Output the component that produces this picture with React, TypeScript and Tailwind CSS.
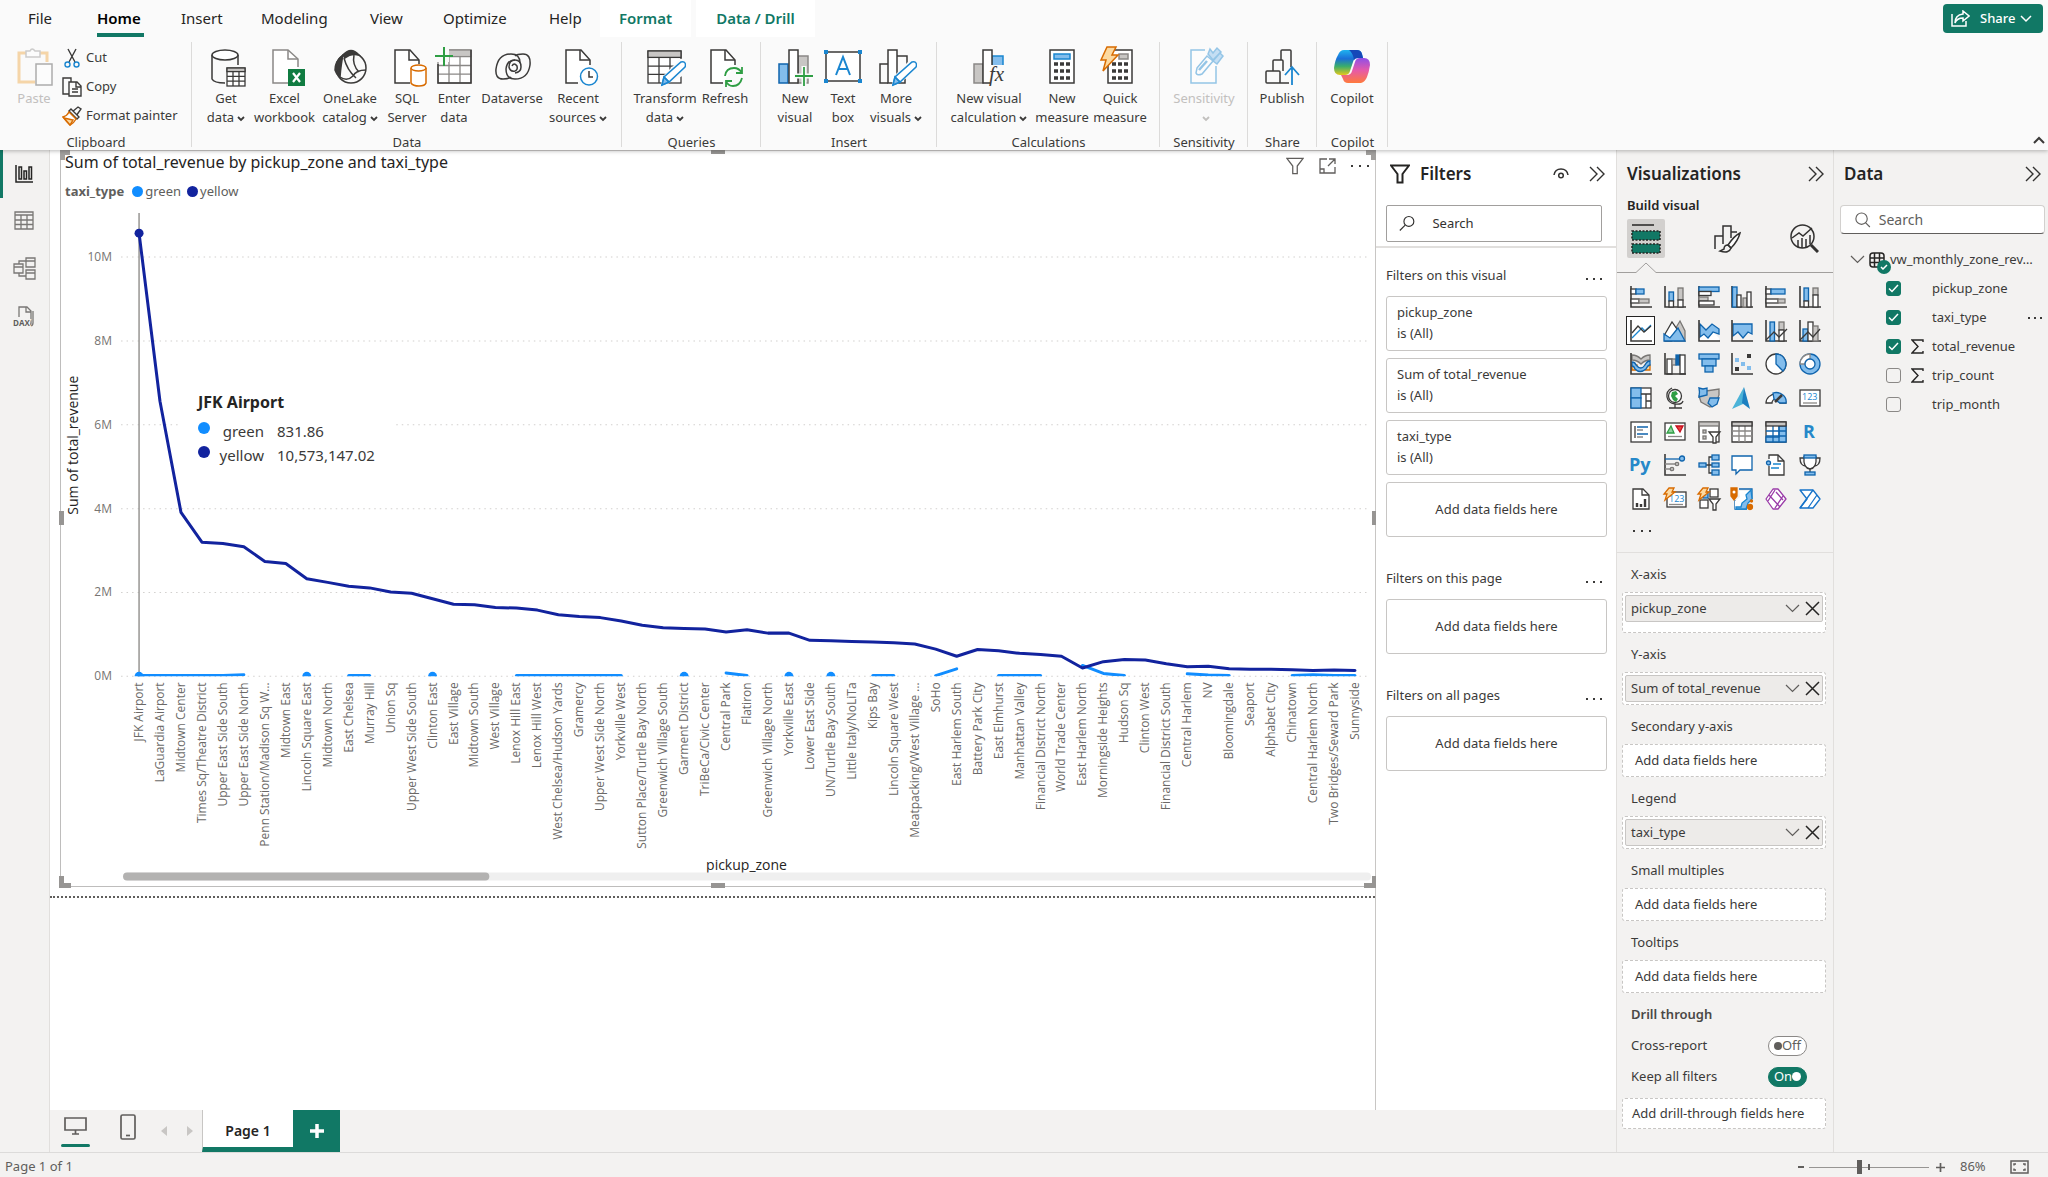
import React from "react";

const DARK = "#3b3a39";
const GRAY = "#8a8886";
const LGRAY = "#c8c6c4";
const BLUE = "#1a86d0";
const NAVY = "#0f64ad";
const SKY = "#83bdec";
const GREEN = "#2f9e44";
const ORANGE = "#d86b00";
const PEACH = "#fcd9a0";

/* ---------- ribbon icons ---------- */

type Kids = { children: React.ReactNode };

function Ico({ children }: Kids) {
  return (
    <svg width="42" height="42" viewBox="0 0 42 42" fill="none" stroke={DARK} strokeWidth="1.5" aria-hidden="true">
      {children}
    </svg>
  );
}

const Grid3 = ({ x, y, w, h, s = DARK }: { x: number; y: number; w: number; h: number; s?: string }) => (
  <g stroke={s} strokeWidth="1.3">
    <rect x={x} y={y} width={w} height={h} fill="#fff" />
    <rect x={x} y={y} width={w} height={h * 0.2} fill={LGRAY} />
    <path
      d={`M${x} ${y + h * 0.47}h${w}M${x} ${y + h * 0.73}h${w}M${x + w / 3} ${y + h * 0.2}v${h * 0.8}M${x + (2 * w) / 3} ${y + h * 0.2}v${h * 0.8}`}
    />
  </g>
);

const Pencil = () => (
  <g stroke={BLUE}>
    <path d="M18 39l2-8 17-15q3-1 4 1t0 4L25 36z" fill="#fff" />
    <path d="M18 39l2-8 5 5z" fill={SKY} />
    <path d="M20 31l5 5" />
  </g>
);

const icons: Record<string, React.ReactNode> = {
  paste: (
    <Ico>
      <g opacity="0.4">
        <path d="M13 7H6v29h16M27 7h7v9" stroke="#f0a030" strokeWidth="3" />
        <path d="M13 5h4q2-4 5 0h5v6H13z" stroke={GRAY} fill="#fff" />
        <rect x="23" y="18" width="16" height="21" stroke={DARK} fill="#fff" />
      </g>
    </Ico>
  ),
  getData: (
    <Ico>
      <path d="M7 9v24q2 4 13 4M33 9v10" />
      <ellipse cx="20" cy="9" rx="13" ry="5" fill="#fff" />
      <Grid3 x={22} y={22} w={18} h={18} />
    </Ico>
  ),
  excel: (
    <Ico>
      <path d="M24 37H9V4h15l10 9v8" stroke={GRAY} fill="#fff" />
      <path d="M24 4v9h10" stroke={GRAY} />
      <rect x="24" y="23" width="17" height="17" fill="#107c41" stroke="none" />
      <path d="M29 27l7 9M36 27l-7 9" stroke="#fff" strokeWidth="2.2" />
    </Ico>
  ),
  onelake: (
    <Ico>
      <circle cx="22" cy="22" r="15" />
      <path d="M14 9Q22 0 30 9q-8-2-14 3z" fill={DARK} />
      <path d="M14 9q-8 6-8 15 1 4 5 7 1-13 3-22z" fill={DARK} />
      <path d="M15 12q3 12 12 20M37 24q-10 0-13 6-6 6-13 1M25 9q-2 10 5 17" />
    </Ico>
  ),
  sql: (
    <Ico>
      <path d="M24 37H9V4h15l9 10v4" fill="#fff" />
      <path d="M23 4v10h10" />
      <g stroke={ORANGE}>
        <path d="M25 22v15q2 3 8 3t7-3V22" fill="#fff" />
        <ellipse cx="32.500" cy="22" rx="7.500" ry="3" fill="#fff" />
      </g>
    </Ico>
  ),
  enter: (
    <Ico>
      <Grid3 x={5} y={4} w={33} h={33} s={GRAY} />
      <rect x="0" y="0" width="16" height="16" fill="#fafafa" stroke="none" />
      <path d="M5 18v19h33V4" />
      <path d="M11 1v19M2 10h18" stroke={GREEN} strokeWidth="2" />
    </Ico>
  ),
  dataverse: (
    <Ico>
      <path d="M32 8q8 0 7 11-2 14-15 14-9 0-9-10 1-9 9-9 6 0 6 7 0 5-6 6" />
      <path d="M12 33q-8 0-7-10Q7 8 20 8q9 0 9 9" />
      <path d="M32 8q-6 0-8 2M12 33q6 0 8-2" />
      <path d="M24 14q-6 0-6 7 1 5 6 4 3-1 2-5-3-4-5 0" />
    </Ico>
  ),
  recent: (
    <Ico>
      <path d="M21 37H9V4h15l9 10v5" fill="#fff" />
      <path d="M23 4v10h10" />
      <circle cx="32" cy="30.500" r="8.500" stroke={BLUE} fill="#fff" />
      <path d="M32 25v6h4" />
    </Ico>
  ),
  transform: (
    <Ico>
      <Grid3 x={4} y={5} w={33} h={32} />
      <path d="M16 42l3-12 17-17h8v14z" fill="#fafafa" stroke="none" />
      <Pencil />
    </Ico>
  ),
  refresh: (
    <Ico>
      <path d="M19 37H7V4h15l9 10v5" fill="#fff" />
      <path d="M21 4v10h10" />
      <g stroke={GREEN} strokeWidth="1.8">
        <path d="M21 30q1-8 9-8 5 0 8 5M38 21v6h-6M38 32q-2 8-9 8-5 0-7-5M22 41v-6h6" />
      </g>
    </Ico>
  ),
  newVisual: (
    <Ico>
      <rect x="5" y="18" width="9" height="19" fill={SKY} stroke={NAVY} />
      <rect x="24" y="10" width="10" height="27" fill={LGRAY} stroke={GRAY} />
      <rect x="15" y="4" width="9" height="33" fill="#fff" />
      <path d="M30 20v20M20 30h19" stroke="#fafafa" strokeWidth="5" />
      <path d="M30 21v19M21 30h18" stroke={GREEN} strokeWidth="1.800" />
    </Ico>
  ),
  textBox: (
    <Ico>
      <rect x="4" y="6" width="34" height="29" fill="#fff" />
      <g fill={BLUE} stroke="none">
        <rect x="2" y="4" width="4" height="4" />
        <rect x="36" y="4" width="4" height="4" />
        <rect x="2" y="33" width="4" height="4" />
        <rect x="36" y="33" width="4" height="4" />
      </g>
      <path d="M14 29l7-18 7 18M16.500 23h9" stroke={BLUE} strokeWidth="2" />
    </Ico>
  ),
  moreVisuals: (
    <Ico>
      <path d="M13 37H5V18h8M22 10h10v8" />
      <path d="M22 4h-9v33h9z" fill="#fff" />
      <path d="M30 26v11h-7" />
      <path d="M16 42l3-12 14-14h8v10z" fill="#fafafa" stroke="none" />
      <Pencil />
    </Ico>
  ),
  visualCalc: (
    <Ico>
      <rect x="6" y="18" width="9" height="19" fill={LGRAY} stroke={GRAY} />
      <rect x="24" y="10" width="11" height="10" fill={SKY} stroke={BLUE} />
      <rect x="15" y="4" width="9" height="33" fill="#fff" />
      <rect x="22" y="19" width="18" height="21" fill="#fafafa" stroke="none" />
      <text x="21" y="35" fontFamily="Liberation Serif, serif" fontStyle="italic" fontSize="21" fill={DARK} stroke="none">
        fx
      </text>
    </Ico>
  ),
  measure: (
    <Ico>
      <rect x="9" y="4" width="24" height="33" fill="#fff" />
      <rect x="13" y="8" width="16" height="5" fill={SKY} stroke={BLUE} />
      <path d="M13 18h16M13 25h16M13 32h16" strokeWidth="3.500" strokeDasharray="4 2" />
    </Ico>
  ),
  quick: (
    <Ico>
      <rect x="9" y="4" width="24" height="33" fill="#fff" />
      <rect x="20" y="8" width="9" height="5" fill={LGRAY} stroke={GRAY} />
      <path d="M13 18h16M13 25h16M13 32h16" strokeWidth="3.500" strokeDasharray="4 2" />
      <path d="M8 1h9l-4 8h6L4 25l3-11H2z" fill={PEACH} stroke={ORANGE} />
    </Ico>
  ),
  sensitivity: (
    <Ico>
      <g stroke={BLUE} opacity="0.45">
        <path d="M22 4H8v33h25V20" fill="#fff" />
        <path d="M14 22l10-12 6 5-11 13q-5 2-6-1z" fill="#fff" />
        <path d="M16 24l8-9" strokeWidth="2.500" />
        <path d="M25 8l5 6 8-8-4-4-4 5-3-4z" fill={SKY} />
        <path d="M30 15l4 3 6-8-3-3z" fill={SKY} />
      </g>
    </Ico>
  ),
  publish: (
    <Ico>
      <path d="M20 14V5q0-1 1-1h8q1 0 1 1v16" />
      <path d="M12 25V15q0-1 1-1h8q1 0 1 1v10" />
      <path d="M19 37H6q-1 0-1-1V26q0-1 1-1h12q1 0 1 1v10q0 1-1 1h10" />
      <path d="M31 39V22M24 29l7-8 7 8" stroke={BLUE} strokeWidth="1.800" />
    </Ico>
  ),
  copilot: (
    <Ico>
      <defs>
        <linearGradient id="cpA" x1="0" y1="0" x2="0" y2="1">
          <stop offset="0" stopColor="#1fb3ef" />
          <stop offset="0.35" stopColor="#1a6fd8" />
          <stop offset="0.65" stopColor="#39ad6b" />
          <stop offset="1" stopColor="#e4c81c" />
        </linearGradient>
        <linearGradient id="cpB" x1="0" y1="0" x2="0" y2="1">
          <stop offset="0" stopColor="#8f4fe8" />
          <stop offset="0.5" stopColor="#e65aa8" />
          <stop offset="1" stopColor="#ff7a3c" />
        </linearGradient>
      </defs>
      <g stroke="none">
        <path d="M30 37H17q-4 0-5-4l-2-4h6q4 0 5-4l3-9q1-4 5-4h4q6 0 6 7-1 7-3 12t-6 6z" fill="url(#cpB)" />
        <path d="M13 4h13q4 0 5 4l1 4h-5q-4 0-5 4l-3 9q-1 4-5 4H9q-6 0-6-7 1-8 4-13 2-5 6-5z" fill="url(#cpA)" />
        <path d="M18 4h8q4 0 5 4l1 4h-5q-3 0-4 2-1-7-5-10z" fill="#1547b8" />
      </g>
    </Ico>
  ),
};

const Caret = ({ className = "" }: { className?: string }) => (
  <svg width="8" height="6" viewBox="0 0 8 6" className={"inline-block " + className} fill="none" stroke="currentColor" strokeWidth="1.8" aria-hidden="true">
    <path d="M1 1l3 3 3-3" />
  </svg>
);

type Tool = { icon: string; a: string; b?: string; caret?: boolean; w: string; off?: boolean };

const tools: Record<string, Tool[]> = {
  Data: [
    { icon: "getData", a: "Get", b: "data", caret: true, w: "w-[52px]" },
    { icon: "excel", a: "Excel", b: "workbook", w: "w-[65px]" },
    { icon: "onelake", a: "OneLake", b: "catalog", caret: true, w: "w-[66px]" },
    { icon: "sql", a: "SQL", b: "Server", w: "w-[48px]" },
    { icon: "enter", a: "Enter", b: "data", w: "w-[46px]" },
    { icon: "dataverse", a: "Dataverse", w: "w-[70px]" },
    { icon: "recent", a: "Recent", b: "sources", caret: true, w: "w-[62px]" },
  ],
  Queries: [
    { icon: "transform", a: "Transform", b: "data", caret: true, w: "w-[66px]" },
    { icon: "refresh", a: "Refresh", w: "w-[54px]" },
  ],
  Insert: [
    { icon: "newVisual", a: "New", b: "visual", w: "w-[48px]" },
    { icon: "textBox", a: "Text", b: "box", w: "w-[48px]" },
    { icon: "moreVisuals", a: "More", b: "visuals", caret: true, w: "w-[58px]" },
  ],
  Calculations: [
    { icon: "visualCalc", a: "New visual", b: "calculation", caret: true, w: "w-[88px]" },
    { icon: "measure", a: "New", b: "measure", w: "w-[58px]" },
    { icon: "quick", a: "Quick", b: "measure", w: "w-[58px]" },
  ],
  Sensitivity: [{ icon: "sensitivity", a: "Sensitivity", b: "", caret: true, w: "w-[70px]", off: true }],
  Share: [{ icon: "publish", a: "Publish", w: "w-[54px]" }],
  Copilot: [{ icon: "copilot", a: "Copilot", w: "w-[54px]" }],
};

const groups: [string, string, string][] = [
  ["Data", "w-[430px]", "pl-2"],
  ["Queries", "w-[139px]", "pl-[10px]"],
  ["Insert", "w-[176px]", "pl-[10px]"],
  ["Calculations", "w-[223px]", "pl-2"],
  ["Sensitivity", "w-[88px]", "pl-[9px]"],
  ["Share", "w-[69px]", "pl-[7px]"],
  ["Copilot", "w-[71px]", "pl-2"],
];

function ToolButton({ t }: { t: Tool }) {
  return (
    <button disabled={t.off} className={"flex shrink-0 flex-col items-center whitespace-nowrap leading-[19px] disabled:text-[#c2c0be] " + t.w}>
      <span className="mb-px h-[42px]">{icons[t.icon]}</span>
      <span>{t.a}</span>
      <span>
        {t.b}
        {t.caret && <Caret className="ml-[3px]" />}
      </span>
    </button>
  );
}

const tabs: [string, string][] = [
  ["File", "w-[32px]"],
  ["Home", "w-[47px]"],
  ["Insert", "w-[43px]"],
  ["Modeling", "w-[72px]"],
  ["View", "w-[36px]"],
  ["Optimize", "w-[69px]"],
  ["Help", "w-[35px]"],
];

const divider = "relative flex shrink-0 flex-col after:absolute after:right-0 after:top-1 after:bottom-[3px] after:w-px after:bg-[#dcdbda] ";

function Ribbon() {
  return (
    <header className="relative z-20 bg-[#fafafa] shadow-[0_1px_4px_rgba(0,0,0,0.28)]">
      <div className="flex h-[38px] items-start justify-between pr-[5px]">
        <nav className="flex text-[15px] text-[#252423]">
          <div className="flex gap-[37px] pl-7">
            {tabs.map(([t, w]) => (
              <button
                key={t}
                className={
                  "h-[37px] whitespace-nowrap border-y-4 border-transparent text-left " +
                  w +
                  (t === "Home" ? " border-b-[#117865] font-semibold text-black" : "")
                }
              >
                {t}
              </button>
            ))}
          </div>
          <button className="ml-[16px] h-[37px] w-[91px] bg-white font-semibold text-[#117865]">Format</button>
          <button className="ml-[5px] h-[37px] w-[119px] bg-white font-semibold text-[#117865]">Data / Drill</button>
        </nav>
        <button className="mt-1 flex h-[29px] w-[100px] items-center rounded bg-[#117865] pl-2 text-[13px] font-medium text-white">
          <svg width="19" height="18" viewBox="0 0 19 18" fill="none" stroke="#fff" strokeWidth="1.5" aria-hidden="true">
            <path d="M1 4v12h14v-5" />
            <path d="M12 1l6 5-6 5V8Q6 8 4 13q0-8 8-9z" />
          </svg>
          <span className="ml-[10px]">Share</span>
          <svg width="12" height="8" viewBox="0 0 12 8" fill="none" stroke="#fff" strokeWidth="1.500" className="ml-[5px]" aria-hidden="true">
            <path d="M1 1l5 5 5-5" />
          </svg>
        </button>
      </div>
      <div className="flex h-[112px] text-[13px] text-[#3b3a39]">
        <section className={divider + "w-[192px]"}>
          <div className="flex flex-1 pt-2 pl-[12px]">
            <button disabled className="flex w-[44px] flex-col items-center leading-[19px] text-[#c2c0be]">
              <span className="mb-px h-[42px]">{icons.paste}</span>Paste
            </button>
            <div className="-mt-[3px] flex flex-col pl-[6px]">
              <button className="flex h-[29px] items-center gap-1">
                <svg width="20" height="20" viewBox="0 0 20 20" fill="none" stroke={DARK} strokeWidth="1.4" aria-hidden="true">
                  <path d="M6 1l7 13M14 1L7 14" />
                  <circle cx="5.500" cy="16.500" r="2.500" stroke={BLUE} />
                  <circle cx="14.500" cy="16.500" r="2.500" stroke={BLUE} />
                </svg>
                Cut
              </button>
              <button className="flex h-[29px] items-center gap-1">
                <svg width="20" height="20" viewBox="0 0 20 20" fill="#fafafa" stroke={DARK} strokeWidth="1.400" aria-hidden="true">
                  <path d="M7 17H1V1h8v4" />
                  <path d="M7 5h8l4 4v10H7zM14 5v5h5M10 12h6M10 15h6" />
                </svg>
                Copy
              </button>
              <button className="flex h-[29px] items-center gap-1 whitespace-nowrap">
                <svg width="20" height="20" viewBox="0 0 20 20" fill="none" stroke={DARK} strokeWidth="1.400" aria-hidden="true">
                  <path d="M10 6l6-5 3 2-5 7" />
                  <path d="M9 3l8 8-2 2-8-8z" fill="#fafafa" />
                  <path d="M7 6l7 7q-2 4-6 6-4-4-7-8 4-1 6-5z" stroke={ORANGE} fill="#fff" />
                  <path d="M2 12l9 2-3 5z" stroke={ORANGE} fill={PEACH} />
                </svg>
                Format painter
              </button>
            </div>
          </div>
          <div className="text-center leading-4">Clipboard</div>
        </section>
        {groups.map(([g, w, pad]) => (
          <section key={g} className={divider + w}>
            <div className={"flex flex-1 pt-2 " + pad}>
              {tools[g].map((t) => (
                <ToolButton key={t.icon} t={t} />
              ))}
            </div>
            <div className="text-center leading-4">{g}</div>
          </section>
        ))}
        <div className="flex flex-1 items-end justify-end pr-[3px] pb-[6px]">
          <button aria-label="Collapse ribbon">
            <svg width="12" height="8" viewBox="0 0 12 8" fill="none" stroke={DARK} strokeWidth="2" aria-hidden="true">
              <path d="M1 7l5-5 5 5" />
            </svg>
          </button>
        </div>
      </div>
    </header>
  );
}

/* ---------- left rail ---------- */

function Rail() {
  const item = "flex h-12 w-full items-center justify-center border-l-[3px] pr-[4px] ";
  return (
    <nav className="flex w-[50px] shrink-0 flex-col border-r border-[#e1dfdd]">
      <button aria-label="Report view" className={item + "border-[#117865]"}>
        <svg width="18" height="18" viewBox="0 0 18 18" fill="none" stroke="#252423" strokeWidth="1.500">
          <path d="M1 0v17h17" />
          <rect x="4" y="2" width="2.500" height="12" />
          <rect x="9" y="6" width="2.500" height="8" />
          <rect x="14" y="2" width="2.500" height="12" />
        </svg>
      </button>
      <button aria-label="Table view" className={item + "border-transparent pb-[3px]"}>
        <svg width="20" height="19" viewBox="0 0 20 19" fill="none" stroke="#797775" strokeWidth="1.300">
          <path d="M1 1h18v17H1zM1 4h18M1 9h18M1 13.500h18M7 4v14M13 4v14" />
        </svg>
      </button>
      <button aria-label="Model view" className={item + "border-transparent pb-[3px]"}>
        <svg width="23" height="23" viewBox="0 0 23 23" fill="none" stroke="#797775" strokeWidth="1.300">
          <path d="M13 1h9v9h-9zM13 4h9M13 13h9v9h-9zM13 16h9M1 7h9v9H1zM1 10h9M6 7V4h7M6 16v3h7" />
        </svg>
      </button>
      <button aria-label="DAX query view" className={item + "border-transparent pb-[3px]"}>
        <svg width="23" height="21" viewBox="0 0 23 21" fill="none" stroke="#797775" strokeWidth="1.300">
          <path d="M6 11V1h8l4 4v12q0 2-2 2M13 1v5h5M20 5v12q0 3-3 3" />
          <text x="0" y="20" fontSize="8" fontWeight="700" fontFamily="Open Sans" fill="#605e5c" stroke="#f3f2f1" strokeWidth="2" paintOrder="stroke">
            DAX
          </text>
        </svg>
      </button>
    </nav>
  );
}

/* ---------- chart ---------- */

const zones = [
  "JFK Airport", "LaGuardia Airport", "Midtown Center", "Times Sq/Theatre District", "Upper East Side South",
  "Upper East Side North", "Penn Station/Madison Sq W…", "Midtown East", "Lincoln Square East", "Midtown North",
  "East Chelsea", "Murray Hill", "Union Sq", "Upper West Side South", "Clinton East", "East Village", "Midtown South",
  "West Village", "Lenox Hill East", "Lenox Hill West", "West Chelsea/Hudson Yards", "Gramercy",
  "Upper West Side North", "Yorkville West", "Sutton Place/Turtle Bay North", "Greenwich Village South",
  "Garment District", "TriBeCa/Civic Center", "Central Park", "Flatiron", "Greenwich Village North",
  "Yorkville East", "Lower East Side", "UN/Turtle Bay South", "Little Italy/NoLiTa", "Kips Bay",
  "Lincoln Square West", "Meatpacking/West Village …", "SoHo", "East Harlem South", "Battery Park City",
  "East Elmhurst", "Manhattan Valley", "Financial District North", "World Trade Center", "East Harlem North",
  "Morningside Heights", "Hudson Sq", "Clinton West", "Financial District South", "Central Harlem", "NV",
  "Bloomingdale", "Seaport", "Alphabet City", "Chinatown", "Central Harlem North", "Two Bridges/Seward Park",
  "Sunnyside",
];

// Revenue in millions, in the same order as zones.
const yellow = [
  10.57, 6.56, 3.91, 3.2, 3.17, 3.09, 2.74, 2.69, 2.33, 2.24, 2.15, 2.11, 2.01, 1.98, 1.85, 1.72, 1.71, 1.64, 1.63,
  1.58, 1.47, 1.43, 1.4, 1.32, 1.22, 1.16, 1.14, 1.13, 1.06, 1.11, 1.03, 1.03, 0.86, 0.85, 0.83, 0.82, 0.8, 0.77,
  0.65, 0.48, 0.64, 0.61, 0.55, 0.52, 0.48, 0.2, 0.35, 0.4, 0.39, 0.3, 0.23, 0.24, 0.18, 0.17, 0.17, 0.16, 0.14,
  0.15, 0.14,
];

const green: [number, number][][] = [
  [[0, 0.02], [1, 0.02], [2, 0.02], [3, 0.02], [4, 0.02], [5, 0.04]],
  [[10, 0.02], [11, 0.02]],
  [[18, 0.02], [23, 0.02]],
  [[28, 0.08], [29, 0.02]],
  [[35, 0.02], [36, 0.02]],
  [[38, 0.02], [39, 0.18]],
  [[41, 0.02], [43, 0.02]],
  [[45, 0.26], [46, 0.07], [47, 0.02]],
  [[50, 0.06], [51, 0.03], [52, 0.02]],
  [[55, 0.02], [56, 0.04], [57, 0.02], [58, 0.02]],
];
const greenDots = [0, 8, 14, 26, 31, 33];

const px = (i: number) => 139 + (i * 1215) / 58;
const py = (m: number) => 677 - m * 41.9;
const pts = (a: [number, number][]) => a.map(([i, m]) => `${px(i).toFixed(1)},${py(m).toFixed(1)}`).join(" ");

function Chart() {
  return (
    <svg viewBox="61 206 1313 680" className="block h-auto w-full" fontFamily="Open Sans, sans-serif" role="img" aria-label="Line chart of total revenue by pickup zone">
      <defs>
        <clipPath id="plot">
          <rect x="110" y="205" width="1264" height="472" />
        </clipPath>
      </defs>
      {[0, 2, 4, 6, 8, 10].map((m) => (
        <g key={m}>
          <line x1="121" x2="1368" y1={py(m)} y2={py(m)} stroke="#d2d0ce" strokeWidth="1" strokeDasharray="1.500 4" />
          <text x="112" y={py(m) + 4} textAnchor="end" fontSize="12" fill="#777472">
            {m}M
          </text>
        </g>
      ))}
      <line x1="139" x2="139" y1="214" y2="677" stroke="#979593" strokeWidth="1.500" />
      <g clipPath="url(#plot)" fill="none" strokeWidth="3" strokeLinejoin="round" strokeLinecap="round">
        {green.map((g) => (
          <polyline key={g[0][0]} points={pts(g)} stroke="#118dff" />
        ))}
        {greenDots.map((i) => (
          <circle key={i} cx={px(i)} cy={py(0)} r="4.500" fill="#118dff" />
        ))}
        <polyline points={pts(yellow.map((v, i) => [i, v]))} stroke="#12239e" />
        <circle cx={px(0)} cy={py(10.57)} r="4.500" fill="#12239e" />
      </g>
      {zones.map((z, i) => (
        <text key={z} transform={`translate(${px(i) + 4} 683) rotate(-90)`} textAnchor="end" fontSize="12" fill="#6b6967">
          {z}
        </text>
      ))}
      <text transform="translate(78 446) rotate(-90)" textAnchor="middle" fontSize="14" fill="#252423">
        Sum of total_revenue
      </text>
      <text x="746" y="870" textAnchor="middle" fontSize="14" fill="#252423">
        pickup_zone
      </text>
      <rect x="123" y="873" width="1247" height="8" rx="4" fill="#efefef" />
      <rect x="123" y="873" width="366" height="8" rx="4" fill="#b3b2b1" />
    </svg>
  );
}

function Dot({ c, s = "size-[11px]" }: { c: string; s?: string }) {
  return <span className={"inline-block rounded-full " + s + " " + c} />;
}

const Handles = () => (
  <>
    <i className="absolute -top-px -left-px size-[10px] border-t-[5px] border-l-[5px] border-[#a19f9d]" />
    <i className="absolute -top-px -right-px size-[10px] border-t-[5px] border-r-[5px] border-[#a19f9d]" />
    <i className="absolute -bottom-[2px] -left-[2px] size-[12px] border-b-[5px] border-l-[5px] border-[#979593]" />
    <i className="absolute -bottom-[2px] -right-px size-[12px] border-b-[5px] border-r-[4px] border-[#979593]" />
    <i className="absolute -top-px left-1/2 h-1 w-[14px] -translate-x-1/2 bg-[#979593]" />
    <i className="absolute -bottom-[2px] left-1/2 h-[5px] w-[14px] -translate-x-1/2 bg-[#979593]" />
    <i className="absolute top-1/2 -left-[2px] h-[14px] w-[5px] -translate-y-1/2 bg-[#979593]" />
    <i className="absolute top-1/2 -right-px h-[14px] w-1 -translate-y-1/2 bg-[#979593]" />
  </>
);

const Funnel = ({ size, c = "#252423", w = 2 }: { size: number; c?: string; w?: number }) => (
  <svg width={size} height={size} viewBox="0 0 20 20" fill="none" stroke={c} strokeWidth={w} aria-hidden="true">
    <path d="M1 1.500h18l-6.500 8.500v8.500h-5V10z" />
  </svg>
);

const Dots = ({ gap = "gap-[5px]" }: { gap?: string }) => (
  <span className={"flex " + gap}>
    <i className="size-[2px] bg-[#3b3a39]" />
    <i className="size-[2px] bg-[#3b3a39]" />
    <i className="size-[2px] bg-[#3b3a39]" />
  </span>
);

function Canvas() {
  return (
    <main className="min-w-0 flex-1 border-r border-[#c8c6c4] bg-white">
      <div className="relative ml-[10px] border border-r-0 border-[#bebdbc] border-t-[#d2d0ce]">
        <Handles />
        <div className="h-[54px] pl-1 pr-[6px]">
          <div className="flex h-[27px] items-start justify-between">
            <h2 className="text-[16px] leading-[22px] text-[#252423]">Sum of total_revenue by pickup_zone and taxi_type</h2>
            <div className="mt-[6px] flex items-center gap-[15px]">
              <button aria-label="Filters"><Funnel size={18} c="#605e5c" w={1.4} /></button>
              <button aria-label="Focus mode">
                <svg width="17" height="16" viewBox="0 0 17 16" fill="none" stroke="#605e5c" strokeWidth="1.300">
                  <path d="M8 1H1v14h15V9M10 1h6v5M16 1L9 8M1 11h4v4" />
                </svg>
              </button>
              <button aria-label="More options"><Dots gap="gap-[6px]" /></button>
            </div>
          </div>
          <div className="flex h-[27px] items-center text-[13px] text-[#605e5c]">
            <b className="mr-[8px]">taxi_type</b>
            <Dot c="bg-[#118dff]" />
            <span className="ml-[2px] mr-[6px]">green</span>
            <Dot c="bg-[#12239e]" />
            <span className="ml-[2px]">yellow</span>
          </div>
        </div>
        <div className="relative">
          <Chart />
          <div role="tooltip" className="absolute left-[120px] top-[181px] w-[213px] bg-white pt-[5px] pb-3 pl-[17px] text-[15px] text-[#3b3a39]">
            <div className="text-[16px] leading-[23px] font-bold text-[#252423]">JFK Airport</div>
            <div className="grid grid-cols-[66px_1fr] gap-x-[13px] pt-[5px] leading-[24px]">
              <span className="flex items-center justify-between"><Dot c="bg-[#118dff]" s="size-3 -mt-[6px]" />green</span>
              <span>831.86</span>
              <span className="flex items-center justify-between"><Dot c="bg-[#12239e]" s="size-3 -mt-[6px]" />yellow</span>
              <span>10,573,147.02</span>
            </div>
          </div>
        </div>
      </div>
      <div className="mt-[9px] border-t-2 border-dotted border-[#605e5c]" />
    </main>
  );
}

/* ---------- filters pane ---------- */

const Chevrons = () => (
  <button aria-label="Collapse pane">
    <svg width="16" height="16" viewBox="0 0 16 16" fill="none" stroke="#323130" strokeWidth="1.400">
      <path d="M1 1l7 7-7 7M8 1l7 7-7 7" />
    </svg>
  </button>
);

function FilterSection({ title, fields }: { title: string; fields: string[] }) {
  return (
    <section className="pr-[9px] pl-[10px] pb-[23px]">
      <div className="flex h-[39px] items-center justify-between pr-[5px] pb-[2px]">
        <h3>{title}</h3>
        <button aria-label={title + " options"} className="pt-[6px]"><Dots /></button>
      </div>
      {fields.map((f) => (
        <div key={f} className="mb-[7px] flex h-[55px] flex-col justify-center rounded-[3px] border border-[#c8c6c4] pl-[10px] pb-[2px] leading-[21px]">
          <span>{f}</span>
          <span>is (All)</span>
        </div>
      ))}
      <div className="flex h-[55px] items-center justify-center rounded-[3px] border border-[#c8c6c4]">Add data fields here</div>
    </section>
  );
}

function Filters() {
  return (
    <aside className="w-[240px] shrink-0 bg-white text-[13px] text-[#3b3a39]">
      <div className="flex h-[48px] items-center pl-[14px] pr-[11px]">
        <Funnel size={20} />
        <h2 className="ml-[10px] text-[17px] font-semibold text-[#252423]">Filters</h2>
        <button aria-label="Show filter pane" className="ml-auto mr-[20px]">
          <svg width="16" height="12" viewBox="0 0 16 12" fill="none" stroke="#323130" strokeWidth="1.500">
            <path d="M1 7q1-6 7-6t7 6" />
            <circle cx="8" cy="7.500" r="2.300" />
          </svg>
        </button>
        <Chevrons />
      </div>
      <div className="border-b-2 border-[#e1dfdd] pt-[7px] pb-[4px] pl-[10px] pr-[14px]">
        <label className="flex h-[37px] items-center rounded-[2px] border border-[#a19f9d] px-3">
          <svg width="20" height="19" viewBox="0 0 20 19" fill="none" stroke="#323130" strokeWidth="1.400" aria-hidden="true">
            <circle cx="12" cy="7" r="6" />
            <path d="M7.500 11.500L1 18" />
          </svg>
          <input aria-label="Search filters" placeholder="Search" className="ml-[17px] w-full min-w-0 bg-transparent outline-none placeholder:text-[#323130]" />
        </label>
      </div>
      <div className="pt-[9px]">
        <FilterSection title="Filters on this visual" fields={["pickup_zone", "Sum of total_revenue", "taxi_type"]} />
        <FilterSection title="Filters on this page" fields={[]} />
        <FilterSection title="Filters on all pages" fields={[]} />
      </div>
    </aside>
  );
}

/* ---------- visualization gallery ---------- */

const ax = <path d="M1 0v21h21" stroke={DARK} strokeWidth="1.6" />;
const B = { fill: SKY, stroke: NAVY };
const G = { fill: LGRAY, stroke: "#797775" };
const W = { fill: "#fff", stroke: DARK };
const bolt = <path d="M5 0h5L8 4h3L1 12l2-6H0z" fill={PEACH} stroke={ORANGE} />;
const smallFunnel = <path d="M11 11h11l-4 5v6h-3v-6z" {...W} />;

const visuals: [string, React.ReactNode][] = [
  ["Stacked bar chart", <>{ax}<rect x="1" y="3" width="5" height="5" {...W} /><rect x="6" y="3" width="8" height="5" {...B} /><rect x="1" y="13" width="8" height="4" {...W} /><rect x="9" y="13" width="10" height="4" {...G} /></>],
  ["Stacked column chart", <>{ax}<rect x="5" y="6" width="4.500" height="9" {...B} /><rect x="5" y="15" width="4.500" height="6" {...W} /><rect x="14" y="2" width="5" height="12" {...G} /><rect x="14" y="14" width="5" height="7" {...W} /></>],
  ["Clustered bar chart", <>{ax}<rect x="1" y="1" width="20" height="4.500" {...B} /><rect x="1" y="5.500" width="12" height="4" {...W} /><rect x="1" y="11" width="9" height="4" {...G} /><rect x="1" y="15" width="15" height="4" {...W} /></>],
  ["Clustered column chart", <>{ax}<rect x="1.500" y="1" width="4.500" height="20" {...B} /><rect x="6" y="9" width="4" height="12" {...W} /><rect x="12" y="12" width="4" height="9" {...G} /><rect x="16" y="6" width="4" height="15" {...W} /></>],
  ["100% stacked bar chart", <>{ax}<rect x="1" y="3" width="5" height="5" {...W} /><rect x="6" y="3" width="14" height="5" {...B} /><rect x="1" y="13" width="12" height="4" {...W} /><rect x="13" y="13" width="7" height="4" {...G} /></>],
  ["100% stacked column chart", <>{ax}<rect x="5" y="2" width="4.500" height="13" {...B} /><rect x="5" y="15" width="4.500" height="6" {...W} /><rect x="14" y="2" width="5" height="7" {...G} /><rect x="14" y="9" width="5" height="12" {...W} /></>],
  ["Line chart", <>{ax}<path d="M2 18l10-10 3 3 6-6" stroke={BLUE} /><path d="M2 13l6-7 6 6 7-6" stroke={DARK} /></>],
  ["Area chart", <><path d="M10 11l6-10 5 10v10H10z" {...G} /><path d="M1 14L8 2l7 10-7 9H1z" {...W} /><path d="M0 21V14l6 4 8-10 7 13z" {...B} /></>],
  ["Stacked area chart", <><path d="M2 17l4-3 4 4 5-6 6 6v3H2z" fill="#fff" stroke="none" /><path d="M2 4l6 6 6-6 7 5v5l-6-2-5 6-4-4-4 3z" {...B} />{ax}</>],
  ["100% stacked area chart", <><path d="M2 4h19v10l-4-2-5 6-5-6-5 4z" {...B} />{ax}</>],
  ["Line and stacked column chart", <>{ax}<rect x="5" y="2" width="4.500" height="19" {...B} /><rect x="14" y="2" width="5" height="8" {...G} /><rect x="14" y="10" width="5" height="11" {...W} /><path d="M1 20l8-8 5 5 8-8" stroke={DARK} /></>],
  ["Line and clustered column chart", <>{ax}<rect x="4" y="9" width="5" height="12" {...B} /><rect x="9" y="2" width="5" height="19" {...W} /><rect x="14" y="6" width="5" height="15" {...G} /><path d="M1 20l8-8 5 5 7-8" stroke={DARK} /></>],
  ["Ribbon chart", <><path d="M2 12h5v5H2zM15 12h5v5h-5z" fill={PEACH} stroke={ORANGE} /><path d="M2 2q5 0 9 4 4-4 9-4v5q-5 0-9 4-4-4-9-4z" {...G} /><path d="M2 9q3 0 4 3 5 6 9 0 2-4 5-4v4q-2 0-4 4-6 5-11 0-1-3-3-3z" {...B} />{ax}</>],
  ["Waterfall chart", <><rect x="3" y="6" width="5" height="15" {...W} /><rect x="8" y="6" width="4" height="6" {...G} /><rect x="12" y="2" width="4" height="10" fill={NAVY} stroke={NAVY} /><rect x="16" y="2" width="5" height="19" {...W} />{ax}</>],
  ["Funnel", <><rect x="1" y="1" width="20" height="5" {...B} /><rect x="4" y="6" width="14" height="7" {...B} /><rect x="7" y="13" width="8" height="6" {...B} /></>],
  ["Scatter chart", <>{ax}<g stroke="none"><rect x="4" y="5" width="4" height="4" fill={SKY} /><rect x="10" y="9" width="4" height="4" fill={SKY} /><rect x="16" y="13" width="4" height="4" fill={SKY} /><rect x="16" y="1" width="4" height="4" fill={DARK} /><rect x="4" y="14" width="4" height="4" fill={DARK} /></g></>],
  ["Pie chart", <><circle cx="11" cy="11" r="10" {...W} /><path d="M11 1a10 10 0 0 1 7 17l-7-7z" {...B} /></>],
  ["Donut chart", <><circle cx="11" cy="11" r="10" {...B} /><path d="M11 1v5a5 5 0 0 0-5 5H1A10 10 0 0 1 11 1z" fill="#fff" stroke={GRAY} /><circle cx="11" cy="11" r="5" fill="#fff" stroke={NAVY} /></>],
  ["Treemap", <><rect x="1" y="1" width="20" height="20" {...W} /><rect x="1" y="1" width="10" height="10" {...B} /><rect x="1" y="11" width="10" height="10" {...B} /><path d="M11 7h10M16 7v14M16 14h5" stroke={DARK} /></>],
  ["Map", <><circle cx="11" cy="9" r="6.500" {...W} /><path d="M8 5l4-1 2 3-3 2 3 3-2 3-3-2-2-4z" fill={GREEN} stroke="none" /><path d="M8 1q-6 3-5 9t8 7 8-3M11 17v4M5 21h13" stroke={DARK} /></>],
  ["Filled map", <><path d="M8 4l13-2v6l-3 9-6 3-9-5-2-6z" {...G} /><path d="M1 1l4 1 4-1v7l-8 2q1-5 0-9z" {...B} /><path d="M12 11h9l-2 6-5 3-4-4z" {...B} /></>],
  ["Azure map", <g stroke="none"><path d="M13 0L1 22l11-5z" fill="#4bb3d8" /><path d="M13 0l6 22-8-6z" fill="#1b7fc0" /></g>],
  ["Gauge", <><path d="M1 16a10 9 0 0 1 20 0h-6a4 4 0 0 0-8 0z" {...W} /><path d="M8 6a10 9 0 0 1 13 10h-6l-6-4z" {...B} /><path d="M10 15l7-7" stroke={DARK} strokeWidth="2.500" /></>],
  ["Card", <><rect x="1" y="3" width="20" height="16" {...W} /><text x="3" y="13" fontSize="9" fill={BLUE} stroke="none" fontFamily="Open Sans">123</text><path d="M4 16h14" stroke={GRAY} /></>],
  ["Multi-row card", <><rect x="1" y="1" width="20" height="20" {...W} /><path d="M5 5v12" stroke={DARK} /><path d="M7 6h11M7 13h11" stroke={NAVY} strokeWidth="1.700" /><path d="M7 9h6M7 16h6" stroke={GRAY} /></>],
  ["KPI", <><rect x="1" y="2" width="20" height="17" {...W} /><path d="M3 12l4-7 3 7z" fill="#8fd19e" stroke={GREEN} /><path d="M12 5h7l-3 6z" fill="#e8413c" stroke="#c50f1f" /><path d="M4 15.500h14" stroke={GRAY} /></>],
  ["Slicer", <><rect x="1" y="1" width="20" height="20" {...W} /><rect x="1" y="1" width="20" height="4" {...G} /><rect x="5" y="9" width="3" height="3" {...G} /><rect x="5" y="15" width="3" height="3" {...G} />{smallFunnel}</>],
  ["Table", <><path d="M1 1h20v20H1z" {...W} /><path d="M1 10h20M1 15h20M8 5v16M14 5v16" stroke={GRAY} /><rect x="1" y="1" width="20" height="4" fill={LGRAY} stroke={DARK} /></>],
  ["Matrix", <><path d="M1 1h20v20H1z" {...W} /><path d="M14 5h7v16H1v-5h13z" {...B} /><path d="M1 10h20M1 15h20M8 5v16M14 5v16" stroke={NAVY} /><rect x="1" y="1" width="20" height="4" fill={LGRAY} stroke={DARK} /></>],
  ["R script visual", <text x="4" y="17" fontSize="18" fontWeight="700" fill="#2688c9" stroke="none" fontFamily="Open Sans">R</text>],
  ["Python visual", <text x="-1" y="17" fontSize="18" fontWeight="700" fill="#2688c9" stroke="none" fontFamily="Open Sans">Py</text>],
  ["Key influencers", <>{ax}<path d="M1 5h15" stroke={NAVY} /><circle cx="18" cy="4.500" r="2.500" {...B} /><path d="M1 10h11M1 15h6" stroke={GRAY} /><circle cx="13" cy="10" r="1.700" {...G} /><circle cx="8" cy="15" r="1.700" {...G} /></>],
  ["Decomposition tree", <><path d="M7 11h10M11 11V3h4M11 11v8h4" stroke={DARK} /><rect x="1" y="9" width="7" height="4" {...B} /><rect x="14" y="1" width="7" height="5" {...B} /><rect x="14" y="9" width="7" height="4" {...B} /><rect x="14" y="16" width="7" height="5" {...B} /></>],
  ["Q&A", <path d="M1 2h20v14H9l-4 4v-4H1z" fill="#fff" stroke={NAVY} />],
  ["Smart narrative", <><path d="M4 5V1h9l6 6v14H4v-9" {...W} /><path d="M13 1v6h6" stroke={DARK} /><circle cx="3.500" cy="9" r="2" {...B} /><path d="M8 10h8M6 14h8" stroke={BLUE} /></>],
  ["Goals", <><path d="M5 4H1q0 8 6 8M17 4h4q0 8-6 8" stroke={DARK} /><path d="M5 3h12q1 11-6 12-7-1-6-12z" {...W} /><path d="M11 15v4" stroke={DARK} /><rect x="5" y="1" width="12" height="3" {...B} /><rect x="6" y="18" width="10" height="3" {...B} /></>],
  ["Paginated report", <><path d="M3 1h10l6 6v14H3z" {...W} /><path d="M12 1v6h7" stroke={DARK} /><path d="M7 19v-4M11 19v-3M15 19v-8" stroke={DARK} strokeWidth="2.400" /></>],
  ["New card", <><rect x="3" y="4" width="19" height="15" {...W} /><text x="5" y="14" fontSize="9" fill={BLUE} stroke="none" fontFamily="Open Sans">123</text><path d="M5 16.500h14" stroke={GRAY} />{bolt}</>],
  ["New slicer", <><rect x="12" y="1" width="8" height="8" {...W} /><rect x="2" y="12" width="8" height="8" {...W} /><rect x="5" y="4" width="5" height="6" {...B} />{smallFunnel}{bolt}</>],
  ["ArcGIS map", <><path d="M4 12v9h12M8 1h13v10" stroke={NAVY} fill="none" /><path d="M8 3h12v8l-5 5-6 3-5 2v-8l5-4z" fill="#fff" stroke="none" /><path d="M20 2l-5 5 1 4-5 4-1 4H5v2h10l2-6 4-4z" fill={SKY} stroke={BLUE} /><path d="M0 0h6v8l-3 4-3-4z" fill={ORANGE} stroke={ORANGE} /><circle cx="3" cy="4" r="1.500" fill="#fff" stroke="none" /><circle cx="19" cy="19" r="2.500" fill={ORANGE} stroke={ORANGE} /><circle cx="20.500" cy="13" r="1" fill={ORANGE} stroke={ORANGE} /></>],
  ["Power Apps", <g stroke="#9a3ba8" fill="#fff" strokeLinejoin="round"><path d="M7 1h8q6 5 7 10-1 5-7 10H7Q1 16 0 11 1 6 7 1z" stroke="none" fill="none" /><path d="M8 1h5l8 10-8 10H8L1 11z" /><path d="M11 4l7 8M18 8l-8 12M4 7l11 12M10 2L3 13" fill="none" /></g>],
  ["Power Automate", <g stroke="#1673c9" fill="#fff" strokeLinejoin="round"><path d="M1 2h13l7 9-7 9H1l7-9z" /><path d="M14 2L1 20M18 7L9 20" fill="none" /></g>],
];

const Down = () => (
  <svg width="15" height="9" viewBox="0 0 15 9" fill="none" stroke="#605e5c" strokeWidth="1.200" aria-hidden="true">
    <path d="M1 1l6.500 6.500L14 1" />
  </svg>
);

function Well({ label, field, tall }: { label: string; field?: string; tall?: boolean }) {
  return (
    <section>
      <h4 className="flex h-[39px] items-center pt-[5px] pl-[9px]">{label}</h4>
      <div className={"rounded-[3px] border border-dashed border-[#c8c6c4] bg-white " + (tall ? "h-[41px]" : "h-[33px]")}>
        {field ? (
          <div className="m-[2px] flex h-[27px] items-center rounded-[2px] border border-[#c8c6c4] bg-[#edebe9] pl-[5px] pr-[2px]">
            <span className="flex-1">{field}</span>
            <button aria-label={field + " menu"} className="mr-[5px]"><Down /></button>
            <button aria-label={"Remove " + field}>
              <svg width="15" height="15" viewBox="0 0 15 15" fill="none" stroke="#252423" strokeWidth="1.500">
                <path d="M1 1l13 13M14 1L1 14" />
              </svg>
            </button>
          </div>
        ) : (
          <div className="flex h-full items-center pl-3">Add data fields here</div>
        )}
      </div>
    </section>
  );
}

function Toggle({ label, on }: { label: string; on?: boolean }) {
  return (
    <label className="relative flex h-[31px] items-center justify-between pl-[9px] pr-[19px]">
      <span>{label}</span>
      <input type="checkbox" role="switch" defaultChecked={on} className="peer sr-only" />
      <span
        className={
          "flex h-5 w-[39px] items-center justify-center rounded-full border text-[13px] leading-none " +
          (on ? "border-[#117865] bg-[#117865] text-white" : "border-[#8a8886] bg-white text-[#605e5c]")
        }
      >
        {!on && <Dot c="bg-[#605e5c]" s="size-2" />}
        {on ? "On" : "Off"}
        {on && <Dot c="bg-white" s="size-[9px]" />}
      </span>
    </label>
  );
}

function Visualizations() {
  return (
    <aside className="w-[217px] shrink-0 border-l border-[#e1dfdd] text-[13px] text-[#3b3a39]">
      <div className="flex h-[48px] items-center justify-between pl-[10px] pr-[9px]">
        <h2 className="text-[17px] font-semibold text-[#252423]">Visualizations</h2>
        <Chevrons />
      </div>
      <h3 className="pl-[10px] leading-[14px] font-semibold text-[#252423]">Build visual</h3>
      <div className="mt-[7px] flex items-center justify-between pl-[10px] pr-[14px]">
        <button aria-label="Build visual" className="flex h-[39px] w-[38px] items-center justify-center rounded-[2px] bg-[#d2d0ce]">
          <svg width="30" height="31" viewBox="0 0 30 31" fill="#117865" stroke="#252423" strokeWidth="1.500">
            <path d="M1 2h22" />
            <rect x="1" y="8" width="28" height="9" strokeDasharray="2 1.500" />
            <rect x="1" y="21" width="28" height="9" strokeDasharray="2 1.500" />
          </svg>
        </button>
        <button aria-label="Format visual">
          <svg width="27" height="28" viewBox="0 0 27 28" fill="none" stroke="#323130" strokeWidth="1.500">
            <path d="M1 24V11h8M9 19V1h8v12M17 7h6" />
            <path d="M26 8q-6 3-12 12l3 3q7-7 9-15z" fill="#fff" />
            <path d="M14 20q-4 0-4 4l-4 2q9 3 11-3z" />
          </svg>
        </button>
        <button aria-label="Analytics">
          <svg width="29" height="29" viewBox="0 0 29 29" fill="none" stroke="#323130" strokeWidth="1.500">
            <circle cx="12.500" cy="12.500" r="11.500" />
            <path d="M2 14l7-5 4 3 9-8M8 23v-7M12 24V14M16 23v-8M20 20v-9" />
            <path d="M21 21l7 7" strokeWidth="3" />
          </svg>
        </button>
      </div>
      <div className="mt-[4px] flex items-end">
        <i className="h-px w-[19px] bg-[#a19f9d]" />
        <svg width="20" height="11" viewBox="0 0 20 11" fill="none" stroke="#a19f9d" aria-hidden="true">
          <path d="M0 10.500L10 1l10 9.500" />
        </svg>
        <i className="h-px flex-1 bg-[#a19f9d]" />
      </div>
      <div className="mt-[7px] mr-[6px] ml-[7px] grid h-[236px] grid-cols-6">
        {visuals.map(([name, art]) => (
          <button
            key={name}
            aria-label={name}
            className={"m-auto flex size-[29px] items-center justify-center " + (name === "Line chart" ? "border border-[#252423] bg-white" : "")}
          >
            <svg width="22" height="22" viewBox="0 0 22 22" fill="none" strokeWidth="1.300" className="overflow-visible">
              {art}
            </svg>
          </button>
        ))}
      </div>
      <div className="flex h-[37px] items-center border-b border-[#e1dfdd] pb-[6px] pl-[16px]">
        <button aria-label="More visuals"><Dots gap="gap-[6px]" /></button>
      </div>
      <div className="pl-[5px] pr-[7px]">
        <Well label="X-axis" field="pickup_zone" tall />
        <Well label="Y-axis" field="Sum of total_revenue" />
        <Well label="Secondary y-axis" />
        <Well label="Legend" field="taxi_type" />
        <Well label="Small multiples" />
        <Well label="Tooltips" />
        <h3 className="flex h-[37px] items-center pt-[7px] pl-[9px] font-semibold text-[#4a4846]">Drill through</h3>
        <Toggle label="Cross-report" />
        <Toggle label="Keep all filters" on />
        <div className="mt-[6px] flex h-[31px] items-center whitespace-nowrap rounded-[3px] border border-dashed border-[#c8c6c4] bg-white pl-[9px]">
          Add drill-through fields here
        </div>
      </div>
    </aside>
  );
}

/* ---------- data pane ---------- */

const fields: [string, boolean, boolean][] = [
  ["pickup_zone", true, false],
  ["taxi_type", true, false],
  ["total_revenue", true, true],
  ["trip_count", false, true],
  ["trip_month", false, false],
];

function DataPane() {
  return (
    <aside className="w-[215px] shrink-0 border-l border-[#e1dfdd] text-[13px] text-[#3b3a39]">
      <div className="flex h-[48px] items-center justify-between pl-[10px] pr-[7px]">
        <h2 className="text-[17px] font-semibold text-[#252423]">Data</h2>
        <Chevrons />
      </div>
      <label className="mt-[7px] mr-[3px] ml-[6px] flex h-[29px] items-center rounded-[4px] border border-[#d2d0ce] border-b-[#605e5c] bg-white pl-[14px]">
        <svg width="18" height="18" viewBox="0 0 18 18" fill="none" stroke="#605e5c" strokeWidth="1.300" aria-hidden="true">
          <circle cx="7.500" cy="7.500" r="6.500" />
          <path d="M12 12l5 5" />
        </svg>
        <input aria-label="Search data" placeholder="Search" className="ml-[8px] w-full min-w-0 bg-transparent text-[14px] outline-none placeholder:text-[#605e5c]" />
      </label>
      <div className="mt-[11px] flex h-[29px] items-center pl-[16px]">
        <button aria-label="Collapse table"><Down /></button>
        <span className="relative mr-[5px] ml-[4px]">
          <svg width="16" height="16" viewBox="0 0 16 16" fill="none" stroke="#252423" strokeWidth="1.500" aria-hidden="true">
            <rect x="1" y="1" width="14" height="14" rx="3" />
            <path d="M1 6h14M1 10.500h14M5.500 1v14M10.500 1v14" />
          </svg>
          <span className="absolute top-2 left-2 flex size-[14px] items-center justify-center rounded-full bg-[#117865]">
            <svg width="8" height="6" viewBox="0 0 8 6" fill="none" stroke="#fff" strokeWidth="1.500" aria-hidden="true">
              <path d="M1 3l2 2 4-4" />
            </svg>
          </span>
        </span>
        <span className="whitespace-nowrap">vw_monthly_zone_rev…</span>
      </div>
      {fields.map(([name, on, sum]) => (
        <div key={name} className="flex h-[29px] items-center pr-[6px] pl-[52px]">
          <span className="relative size-[15px]">
            <input
              id={name}
              type="checkbox"
              defaultChecked={on}
              className="peer block size-[15px] appearance-none rounded-[3px] border border-[#8a8886] checked:border-[#117865] checked:bg-[#117865]"
            />
            <svg viewBox="0 0 15 15" fill="none" stroke="#fff" strokeWidth="1.500" className="pointer-events-none absolute inset-0 hidden peer-checked:block" aria-hidden="true">
              <path d="M3 7.500l3 3L12 4" />
            </svg>
          </span>
          <span className="flex w-[31px] pl-[10px]">
            {sum && (
              <svg width="13" height="15" viewBox="0 0 13 15" fill="none" stroke="#252423" strokeWidth="1.400" aria-hidden="true">
                <path d="M12 3V1H1l6 6.500L1 14h11v-2" />
              </svg>
            )}
          </span>
          <label htmlFor={name} className="flex-1">{name}</label>
          {name === "taxi_type" && <button aria-label="Field options"><Dots gap="gap-[4px]" /></button>}
        </div>
      ))}
    </aside>
  );
}

/* ---------- bottom bars ---------- */

function PageTabs() {
  return (
    <div className="flex h-[42px]">
      <button aria-label="Desktop layout" className="ml-[11px] flex w-[29px] flex-col items-center justify-between pt-[7px] pb-[5px]">
        <svg width="23" height="18" viewBox="0 0 23 18" fill="none" stroke="#605e5c" strokeWidth="1.700">
          <path d="M1 1h21v12H1zM11.500 13v4M8 17h7" />
        </svg>
        <i className="h-[3px] w-[29px] rounded-full bg-[#117865]" />
      </button>
      <button aria-label="Mobile layout" className="ml-[30px] flex items-start pt-[4px]">
        <svg width="16" height="26" viewBox="0 0 16 26" fill="none" stroke="#605e5c" strokeWidth="1.700">
          <rect x="1" y="1" width="14" height="24" rx="1.500" />
          <path d="M6 21.500h4" />
        </svg>
      </button>
      <button aria-label="Previous page" className="ml-[25px]">
        <svg width="6" height="10" viewBox="0 0 6 10" fill="#c8c6c4"><path d="M6 0v10L0 5z" /></svg>
      </button>
      <button aria-label="Next page" className="ml-[20px]">
        <svg width="6" height="10" viewBox="0 0 6 10" fill="#c8c6c4"><path d="M0 0v10l6-5z" /></svg>
      </button>
      <button className="ml-[9px] h-[42px] w-[91px] border-b-[5px] border-l border-b-[#117865] border-l-[#c8c6c4] bg-white pt-[3px] text-[14px] font-semibold text-[#252423]">
        Page 1
      </button>
      <button aria-label="New page" className="flex h-[42px] w-[47px] items-center justify-center bg-[#117865]">
        <svg width="14" height="14" viewBox="0 0 14 14" stroke="#fff" strokeWidth="3.500"><path d="M7 0v14M0 7h14" /></svg>
      </button>
    </div>
  );
}

function StatusBar() {
  return (
    <footer className="flex h-[25px] items-center border-t border-[#dcdbda] pt-[4px] pr-[19px] pl-[5px] text-[13px] text-[#605e5c]">
      <span>Page 1 of 1</span>
      <button aria-label="Zoom out" className="mr-[5px] ml-auto flex size-[6px] items-center">
        <i className="h-[2px] w-[6px] bg-[#605e5c]" />
      </button>
      <div className="relative flex w-[120px] items-center">
        <i className="absolute left-[59px] h-[6px] w-[2px] bg-[#605e5c]" />
        <input
          type="range"
          aria-label="Zoom"
          min={0}
          max={100}
          defaultValue={42}
          className="h-[14px] w-full appearance-none bg-transparent [&::-webkit-slider-runnable-track]:h-px [&::-webkit-slider-runnable-track]:bg-[#979593] [&::-webkit-slider-thumb]:-mt-[7px] [&::-webkit-slider-thumb]:h-[14px] [&::-webkit-slider-thumb]:w-[5px] [&::-webkit-slider-thumb]:appearance-none [&::-webkit-slider-thumb]:bg-[#605e5c]"
        />
      </div>
      <button aria-label="Zoom in" className="ml-[7px]">
        <svg width="9" height="9" viewBox="0 0 9 9" stroke="#605e5c" strokeWidth="1.700"><path d="M4.500 0v9M0 4.500h9" /></svg>
      </button>
      <span className="ml-[15px] w-[50px]">86%</span>
      <button aria-label="Fit to page">
        <svg width="19" height="14" viewBox="0 0 19 14" fill="none" stroke="#605e5c" strokeWidth="1.500">
          <rect x="1" y="1" width="17" height="12" />
          <path d="M4 5.500V4h2M13 4h2v1.500M15 8.500V10h-2M6 10H4V8.500" />
        </svg>
      </button>
    </footer>
  );
}

export default function App() {
  return (
    <div className="flex min-h-screen flex-col bg-[#f3f2f1] font-['Noto_Sans','Open_Sans',sans-serif]">
      <Ribbon />
      <div className="flex flex-1">
        <Rail />
        <div className="flex min-w-0 flex-1 flex-col">
          <div className="flex flex-1">
            <Canvas />
            <Filters />
          </div>
          <PageTabs />
        </div>
        <Visualizations />
        <DataPane />
      </div>
      <StatusBar />
    </div>
  );
}
